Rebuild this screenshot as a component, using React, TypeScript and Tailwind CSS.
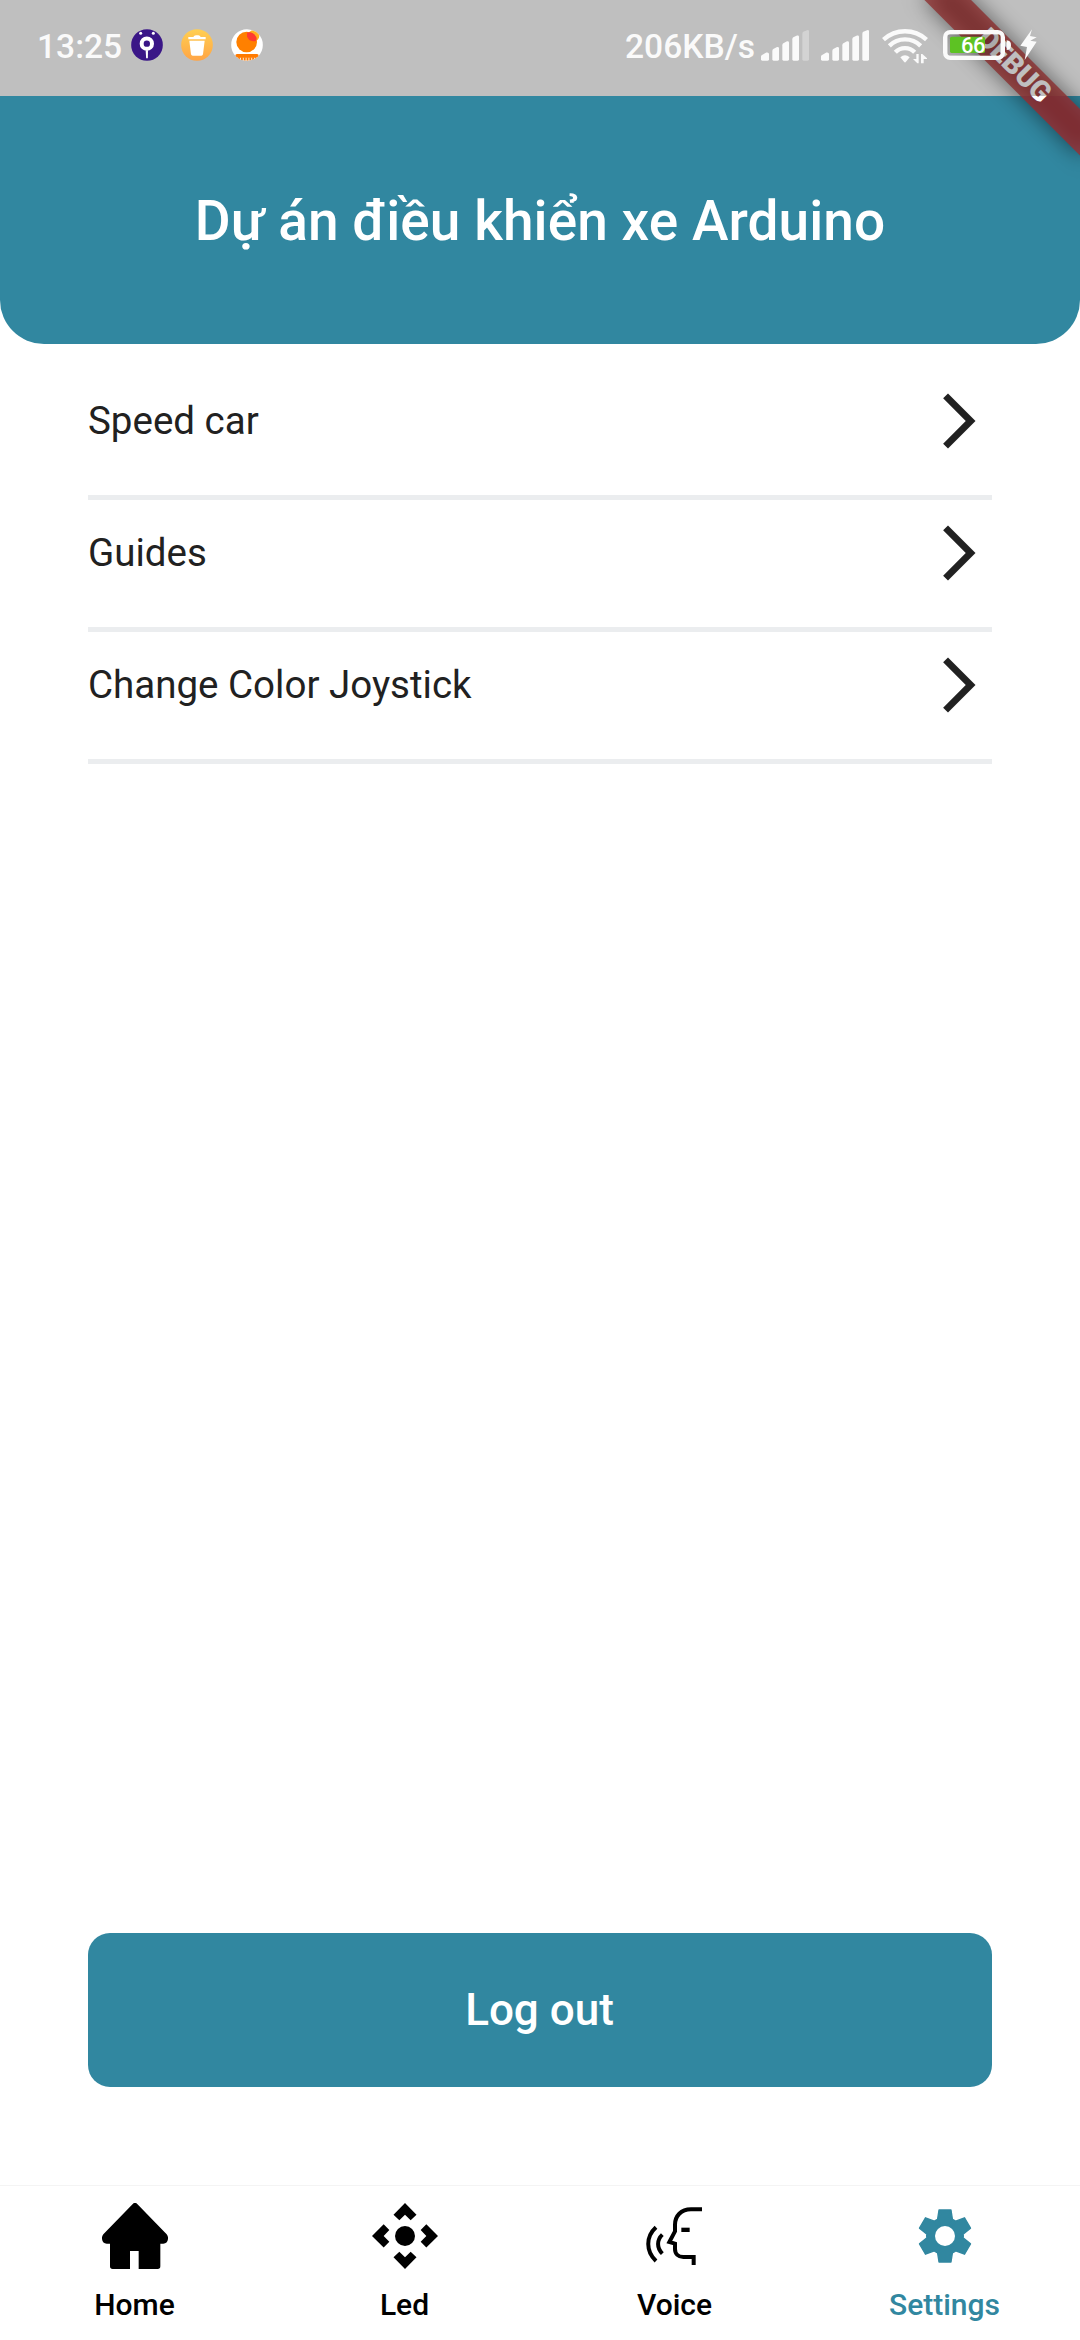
import React from 'react';

function SignalBars({ weak = false }: { weak?: boolean }) {
  return (
    <svg className="h-[31px] w-[48px] shrink-0" viewBox="0 0 144 93" fill="#fafafa">
      <path d="M0 79Q0 77 2 75.500L16 67.500Q24 66 24 72V88Q24 92 20 92H4Q0 92 0 88Z" />
      <path d="M34 63Q34 59 37 57L48 51Q54 50 54 55V88Q54 92 50 92H38Q34 92 34 88Z" />
      <path d="M64 46Q64 42 67 40L78 34Q84 33 84 38V88Q84 92 80 92H68Q64 92 64 88Z" />
      <path d="M94 28Q94 24 97 22L108 16.500Q114 15 114 20V88Q114 92 110 92H98Q94 92 94 88Z" />
      <path
        opacity={weak ? 0.35 : 1}
        d="M124 11Q124 7 127 5L138 0.500Q144 -1 144 4V88Q144 92 140 92H128Q124 92 124 88Z"
      />
    </svg>
  );
}

function WifiIcon() {
  return (
    <svg className="h-[35px] w-[46px] shrink-0" viewBox="246 86 138 105" fill="none" stroke="#fafafa">
      <path strokeWidth="13" d="M250.500 118A95 95 0 0 1 379.500 118" />
      <path strokeWidth="13" d="M268 136.500A67 67 0 0 1 362 136.500" />
      <path strokeWidth="13" d="M286 156A40 40 0 0 1 344 156" />
      <path
        fill="#fafafa"
        stroke="none"
        d="M301 171Q315 158 329 171L318 184.500Q315 188 312 184.500ZM349 161H356V189H352L339 176H349ZM363 189V161H367L381 174V176H371V189Z"
      />
    </svg>
  );
}

function BatteryIcon() {
  return (
    <div className="relative h-[30px] w-[68px] shrink-0">
      <svg className="h-[30px] w-[68px]" viewBox="429 90 204 90">
        <rect x="443" y="104" width="158" height="62" fill="#000" opacity="0.1" />
        <rect x="450" y="110" width="105" height="49" rx="5" fill="#5dc223" />
        <rect x="435.500" y="96.500" width="173" height="77" rx="15" fill="none" stroke="#fafafa" strokeWidth="13" />
        <path d="M620 121Q633 122 633 135.500Q633 149 620 150Z" fill="#fafafa" />
      </svg>
      <span className="absolute top-[5px] left-[18px] text-[22px] leading-[22px] font-medium tracking-[-0.4px] text-white">
        66
      </span>
    </div>
  );
}

function StatusBar() {
  return (
    <div className="relative z-20 flex h-24 shrink-0 items-center bg-black/25 pl-[37px] text-[33.6px] leading-[34px] font-medium text-[#fafafa]">
      <span className="w-[94px] pb-[3px]">13:25</span>
      <div className="flex gap-[18px] pb-[7px]">
        <svg className="size-8" viewBox="393 86 96 96">
          <circle cx="441" cy="134" r="47.500" fill="#3a1687" />
          <circle cx="422" cy="99" r="4.500" fill="#fff" />
          <circle cx="460" cy="99" r="4.500" fill="#fff" />
          <circle cx="440.500" cy="130" r="15.500" fill="none" stroke="#fff" strokeWidth="12" />
          <path d="M437 150H444L443.500 174H438.500Z" fill="#fff" />
        </svg>
        <svg className="size-8" viewBox="543 86 96 96">
          <defs>
            <linearGradient id="bin" x1="0" y1="0" x2="0" y2="1">
              <stop offset="0" stopColor="#ffcf52" />
              <stop offset="1" stopColor="#ffa445" />
            </linearGradient>
          </defs>
          <circle cx="591" cy="134" r="47.500" fill="url(#bin)" />
          <path
            d="M580 110Q582 105 588 105H595Q600 105 602 110H617V117H565V110ZM568 121H614L609 162Q608 166 604 166H578Q574 166 573 162Z"
            fill="#fff"
          />
        </svg>
        <svg className="size-8" viewBox="693 86 96 96">
          <defs>
            <clipPath id="round">
              <circle cx="741" cy="134" r="47.500" />
            </clipPath>
          </defs>
          <g clipPath="url(#round)">
            <rect x="693" y="86" width="96" height="96" fill="#fff" />
            <circle cx="761" cy="106" r="17" fill="#ffb020" />
            <circle cx="740" cy="125" r="31" fill="#ff8000" />
            <path d="M741 97Q757 92 769 110Q771 117 767 122Q746 126 741 108Z" fill="#ff3b30" />
            <rect x="706" y="161" width="70" height="11" rx="5" fill="#ff7a00" />
            <path d="M714 176H768" stroke="#ff7a00" strokeWidth="10" strokeDasharray="6 2.500" />
          </g>
        </svg>
      </div>
      <span className="ml-[362px] w-[136px] pb-[3px]">206KB/s</span>
      <div className="flex items-start pb-[4px]">
        <div className="flex gap-3 pt-[1px]">
          <SignalBars weak />
          <SignalBars />
        </div>
        <div className="ml-[13px]">
          <WifiIcon />
        </div>
        <div className="mt-[1px] ml-[15px]">
          <BatteryIcon />
        </div>
        <svg className="ml-[9px] h-[31px] w-[17px]" viewBox="661 88 51 93" fill="#fafafa">
          <path d="M697 89L662 138L682 142L675 181L711 126L692 123L711 113L691 109Z" />
        </svg>
      </div>
    </div>
  );
}

function DebugBanner() {
  return (
    <div className="absolute top-0 left-[1080px] z-10 size-0 rotate-45">
      <div className="absolute top-[77px] -left-[110px] h-[33px] w-[220px] bg-black/50 blur-[11px]" />
      <div className="absolute top-[77px] -left-[110px] flex h-[33px] w-[220px] items-center justify-center bg-[#b71c1c]/63 pb-[2px] text-[28.5px] leading-[31px] font-black text-white">
        DEBUG
      </div>
    </div>
  );
}

function MenuRow({ label }: { label: string }) {
  return (
    <li className="h-[132px]">
      <div className="flex h-[66px] items-center justify-between">
        <span className="leading-[66px]">{label}</span>
        <svg className="size-[66px]" viewBox="0 0 24 24" fill="#212121">
          <path d="M6.230 20.230 8 22l10-10L8 2 6.230 3.770 14.460 12z" />
        </svg>
      </div>
      <div className="mt-[41px] h-[5px] bg-[#ebedef]" />
    </li>
  );
}

function HomeIcon() {
  return (
    <svg className="size-[66px]" viewBox="126 69 198 198" fill="currentColor">
      <path d="M219 71Q225 66 231 71L320 163Q325 169 324 177Q322 191 310 191H301V259Q301 267 293 267H236V213H210V267H158Q150 267 150 259V191H140Q128 191 126 177Q125 169 130 163Z" />
    </svg>
  );
}

function LedIcon() {
  return (
    <svg className="size-[66px]" viewBox="936 69 198 198" fill="currentColor">
      <circle cx="1035" cy="168" r="30" />
      <path d="M1035 69L1069.500 104L1052 121L1035 104L1018 121L1000.500 104Z" />
      <path d="M1035 267L1069.500 232L1052 215L1035 232L1018 215L1000.500 232Z" />
      <path d="M936 168L971 133L988 150L971 168L988 185L971 202.500Z" />
      <path d="M1134 168L1099 133L1082 150L1099 168L1082 185L1099 202.500Z" />
    </svg>
  );
}

function VoiceIcon() {
  return (
    <svg className="size-[66px]" viewBox="126 69 198 198" fill="none" stroke="currentColor" strokeWidth="12">
      <path d="M306 88H273C243 88 225 108 225 134V154L208 186L225 191V207C225 222 235 231 250 231H281V255" />
      <path d="M244 149.500H269" strokeWidth="13" />
      <path d="M187 164C170 180 170 204 187 221" />
      <path d="M168 142C137 170 137 214 168 243" />
    </svg>
  );
}

const TOOTH = 'M-22 -52L-18 -78H18L22 -52L0 0Z';

function SettingsIcon() {
  return (
    <svg className="size-[66px]" viewBox="-99 -99 198 198" fill="currentColor">
      <mask id="hub">
        <rect x="-99" y="-99" width="198" height="198" fill="#fff" />
        <circle r="30" fill="#000" />
      </mask>
      <g mask="url(#hub)" stroke="currentColor" strokeWidth="4" strokeLinejoin="round">
        <circle r="55" />
        {[0, 60, 120, 180, 240, 300].map((angle) => (
          <path key={angle} d={TOOTH} transform={`rotate(${angle})`} />
        ))}
      </g>
    </svg>
  );
}

const TABS = [
  { label: 'Home', icon: <HomeIcon /> },
  { label: 'Led', icon: <LedIcon /> },
  { label: 'Voice', icon: <VoiceIcon /> },
  { label: 'Settings', icon: <SettingsIcon />, active: true },
];

export default function App() {
  return (
    <div className="relative flex h-[2340px] w-[1080px] flex-col overflow-hidden bg-white font-[Roboto,sans-serif] text-[#212121]">
      <StatusBar />
      <DebugBanner />
      <header className="flex h-[248px] shrink-0 items-center justify-center rounded-b-[44px] bg-[#3187a0] pt-px">
        <h1 className="text-[55px] leading-[64px] font-medium tracking-[0.06px] text-white">
          Dự án điều khiển xe Arduino
        </h1>
      </header>
      <main className="flex grow flex-col px-[88px] pt-11">
        <ul className="text-[38.5px]">
          <MenuRow label="Speed car" />
          <MenuRow label="Guides" />
          <MenuRow label="Change Color Joystick" />
        </ul>
        <button className="mt-auto mb-[98px] h-[154px] rounded-[22px] bg-[#3187a0] pr-px text-[44px] leading-[52px] font-medium text-white">
          Log out
        </button>
      </main>
      <nav className="grid h-[155px] shrink-0 grid-cols-4 border-t border-[#f4f4f4]">
        {TABS.map((tab) => (
          <div
            key={tab.label}
            className={`flex flex-col items-center pt-[17px] ${tab.active ? 'text-[#3187a0]' : 'text-black'}`}
          >
            {tab.icon}
            <span className="mt-[18px] pr-px text-[30px] leading-[36px] font-medium">{tab.label}</span>
          </div>
        ))}
      </nav>
    </div>
  );
}
